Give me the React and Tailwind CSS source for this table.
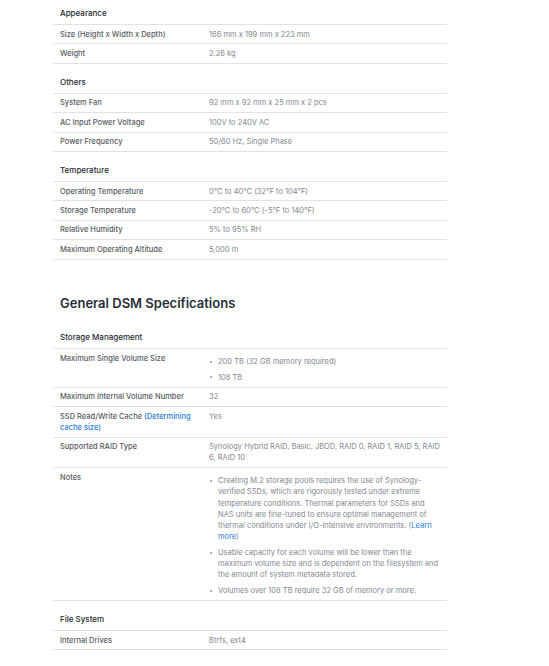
const groups = [
  {
    title: "Appearance",
    first: true,
    rows: [
      { label: "Size (Height x Width x Depth)", value: "166 mm x 199 mm x 223 mm" },
      { label: "Weight", value: "2.26 kg" },
    ],
  },
  {
    title: "Others",
    rows: [
      { label: "System Fan", value: "92 mm x 92 mm x 25 mm x 2 pcs" },
      { label: "AC Input Power Voltage", value: "100V to 240V AC" },
      { label: "Power Frequency", value: "50/60 Hz, Single Phase" },
    ],
  },
  {
    title: "Temperature",
    rows: [
      { label: "Operating Temperature", value: "0°C to 40°C (32°F to 104°F)" },
      { label: "Storage Temperature", value: "-20°C to 60°C (-5°F to 140°F)" },
      { label: "Relative Humidity", value: "5% to 95% RH" },
      { label: "Maximum Operating Altitude", value: "5,000 m" },
    ],
  },
];

function Bullets({ items }) {
  return (
    <ul className="mt-[3.5px] flex flex-col gap-[4.5px]">
      {items.map((item, i) => (
        <li key={i} className="flex">
          <span className="w-[9px] shrink-0 pl-[1px] pt-[4.6px]">
            <span className="block w-[2px] h-[2px] rounded-full bg-[#96999d]" />
          </span>
          <span>{item}</span>
        </li>
      ))}
    </ul>
  );
}

function GroupHeader({ title, first }) {
  return (
    <div
      className={`${first ? "pt-[8px]" : "pt-[13px]"} pb-[5px] px-[7px] border-b border-[#e2e2e2] text-[8px] leading-[11px] font-medium text-[#24292f]`}
    >
      {title}
    </div>
  );
}

function Row({ label, children }) {
  return (
    <div className="flex border-b border-[#e2e2e2] py-[3.6px] text-[7.5px] leading-[11.2px]">
      <div className="w-[156px] shrink-0 pl-[7px] pr-[8px] font-medium text-[#575b61]">{label}</div>
      <div className="flex-1 pr-[6px] text-[#83878c]">{children}</div>
    </div>
  );
}

const link = "text-[#2a7bd4]";

export default function App() {
  return (
    <div className="min-h-screen bg-white" style={{ fontFamily: "Inter, 'Noto Sans', sans-serif" }}>
      <div className="ml-[53px] w-[394px]">
        {groups.map((g) => (
          <div key={g.title}>
            <GroupHeader title={g.title} first={g.first} />
            {g.rows.map((r) => (
              <Row key={r.label} label={r.label}>
                {r.value}
              </Row>
            ))}
          </div>
        ))}

        <h2 className="mt-[35px] px-[7px] text-[13px] leading-[16px] font-semibold text-[#272e37]">
          General DSM Specifications
        </h2>

        <div className="mt-[8.5px]">
          <GroupHeader title="Storage Management" />
          <Row label="Maximum Single Volume Size">
            <Bullets items={["200 TB (32 GB memory required)", "108 TB"]} />
          </Row>
          <Row label="Maximum Internal Volume Number">32</Row>
          <Row
            label={
              <>
                SSD Read/Write Cache <span className={link}>(Determining cache size)</span>
              </>
            }
          >
            Yes
          </Row>
          <Row label="Supported RAID Type">
            Synology Hybrid RAID, Basic, JBOD, RAID 0, RAID 1, RAID 5, RAID 6, RAID 10
          </Row>
          <Row label="Notes">
            <Bullets
              items={[
                <>
                  Creating M.2 storage pools requires the use of Synology-verified SSDs, which are
                  rigorously tested under extreme temperature conditions. Thermal parameters for SSDs
                  and NAS units are fine-tuned to ensure optimal management of thermal conditions
                  under I/O-intensive environments. (<span className={link}>Learn more</span>)
                </>,
                "Usable capacity for each volume will be lower than the maximum volume size and is dependent on the filesystem and the amount of system metadata stored.",
                "Volumes over 108 TB require 32 GB of memory or more.",
              ]}
            />
          </Row>
        </div>

        <div>
          <GroupHeader title="File System" />
          <Row label="Internal Drives">Btrfs, ext4</Row>
        </div>
      </div>
    </div>
  );
}
